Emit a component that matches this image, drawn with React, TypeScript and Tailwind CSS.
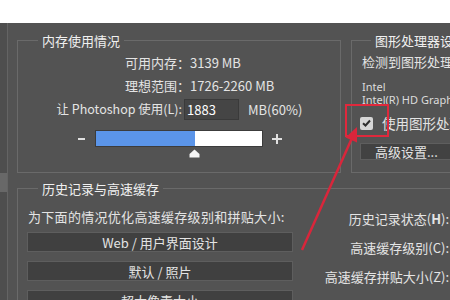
import React from 'react'

const font = "font-['Noto_Sans_CJK_SC','Noto_Sans',sans-serif]"

function Btn({ label }: { label: string }) {
  return (
    <div className="h-[20px] w-[266px] flex items-center justify-center bg-[#404040] border border-[#5e5e5e] text-[13px] text-[#e4e4e4] leading-none">{label}</div>
  )
}

export default function App() {
  return (
    <div className={'relative w-[450px] h-[300px] overflow-hidden bg-[#535353] text-[#e4e4e4] ' + font}>
      <div className="h-[23px] bg-white" />
      <div className="flex h-[277px]">
        {/* left scroll strip */}
        <div className="w-[8px] shrink-0 bg-[#4e4e4e] border-r border-[#646464]">
          <div className="mt-[150px] h-[19px] bg-[#686868]" />
        </div>

        <div className="flex-1 pl-[9px] pt-[17px]">
          <div className="flex gap-[10px]">
            {/* 内存使用情况 */}
            <div className="relative w-[324px] h-[133px] shrink-0 border border-[#6a6a6a]">
              <span className="absolute left-[20px] -top-[9px] px-[4px] bg-[#535353] text-[13px] leading-[18px] text-[#f0f0f0]">内存使用情况</span>
              <div className="pt-[10px] text-[13px]">
                <div className="flex items-center h-[23px]">
                  <span className="w-[172px] text-right">可用内存：</span>
                  <span>3139 MB</span>
                </div>
                <div className="flex items-center h-[23px]">
                  <span className="w-[172px] text-right">理想范围：</span>
                  <span>1726-2260 MB</span>
                </div>
                <div className="flex items-center h-[21px] mt-[2px]">
                  <span className="w-[164px] text-right text-[12.5px]">让 Photoshop 使用(L):</span>
                  <div className="ml-[2px] w-[55px] h-[21px] bg-[#454545] border border-[#3a3a3a] flex items-center pl-[2px] text-white">1883</div>
                  <span className="ml-[9px]">MB(60%)</span>
                </div>
                <div className="flex items-center mt-[10px] h-[17px]">
                  <svg className="ml-[60px]" width="7" height="2" viewBox="0 0 7 2"><rect width="7" height="2" fill="#e0e0e0" /></svg>
                  <div className="ml-[10px] w-[168px] h-[17px] bg-white border border-[#3c3c3c] flex">
                    <div className="w-[99px] h-full bg-[#5b95e9]" />
                  </div>
                  <svg className="ml-[9px]" width="10" height="10" viewBox="0 0 10 10"><rect x="4" width="2" height="10" fill="#e0e0e0" /><rect y="4" width="10" height="2" fill="#e0e0e0" /></svg>
                </div>
                <svg className="ml-[171px] mt-[2px]" width="11" height="9" viewBox="0 0 11 9">
                  <path d="M5.5 0.5 L10.5 5 L10.5 8.5 L0.5 8.5 L0.5 5 Z" fill="#f4f4f4" />
                </svg>
              </div>
            </div>

            {/* 图形处理器设置 */}
            <div className="relative w-[140px] h-[133px] shrink-0 border border-[#6a6a6a]">
              <span className="absolute left-[19px] -top-[9px] px-[4px] bg-[#535353] text-[13px] leading-[18px] whitespace-nowrap text-[#f0f0f0]">图形处理器设置</span>
              <div className="pt-[10px] pl-[8px] whitespace-nowrap">
                <div className="ml-[2px] h-[22px] flex items-center text-[13px]">检测到图形处理器：</div>
                <div className="ml-[2px] mt-[7px] text-[11px] leading-[13px] font-['Noto_Sans',sans-serif] text-[#dcdcdc]">
                  <div>Intel</div>
                  <div>Intel(R) HD Graphics</div>
                </div>
                <div className="mt-[6px] h-[22px] flex items-center">
                  <div className="w-[13px] h-[13px] bg-[#d6d6d6] rounded-[2px] flex items-center justify-center">
                    <svg width="9" height="8" viewBox="0 0 9 8"><path d="M1 4.2 L3.5 6.5 L8 1.5" stroke="#2e2e2e" strokeWidth="2" fill="none" /></svg>
                  </div>
                  <span className="ml-[9px] text-[13.5px]">使用图形处理器</span>
                </div>
                <div className="mt-[9px] h-[17px] w-[120px] bg-[#424242] border border-[#5e5e5e] flex items-center pl-[14px] text-[13px] leading-none">高级设置...</div>
              </div>
            </div>
          </div>

          {/* 历史记录与高速缓存 */}
          <div className="relative mt-[15px] w-[460px] h-[140px] border border-[#6a6a6a]">
            <span className="absolute left-[20px] -top-[9px] px-[4px] bg-[#535353] text-[13px] leading-[18px] text-[#f0f0f0]">历史记录与高速缓存</span>
            <div className="flex text-[13px]">
              <div className="w-[282px] shrink-0 pl-[9px] pt-[19px]">
                <div className="ml-[1px] h-[18px] leading-[18px] whitespace-nowrap tracking-[0.3px]">为下面的情况优化高速缓存级别和拼贴大小:</div>
                <div className="mt-[6px] flex flex-col gap-[9px]">
                  <Btn label="Web / 用户界面设计" />
                  <Btn label="默认 / 照片" />
                  <Btn label="超大像素大小" />
                </div>
              </div>
              <div className="w-[149px] shrink-0 pt-[15px] text-right whitespace-nowrap">
                <div className="h-[29px] leading-[29px]">历史记录状态(<b>H</b>):</div>
                <div className="h-[29px] leading-[29px]">高速缓存级别(C):</div>
                <div className="h-[29px] leading-[29px]">高速缓存拼贴大小(Z):</div>
                <div className="h-[29px] leading-[29px]">拓宽高速缓存级别:</div>
              </div>
            </div>
          </div>
        </div>
      </div>

      {/* red annotation */}
      <svg className="absolute inset-0 pointer-events-none" width="450" height="300" viewBox="0 0 450 300">
        <rect x="346" y="105" width="42" height="31" fill="none" stroke="#e0283c" strokeWidth="2" />
        <line x1="302" y1="250" x2="352" y2="138" stroke="#d9263b" strokeWidth="2.5" />
        <polygon points="357,127 357,142.5 345.5,137.5" fill="#d9263b" />
      </svg>
    </div>
  )
}
